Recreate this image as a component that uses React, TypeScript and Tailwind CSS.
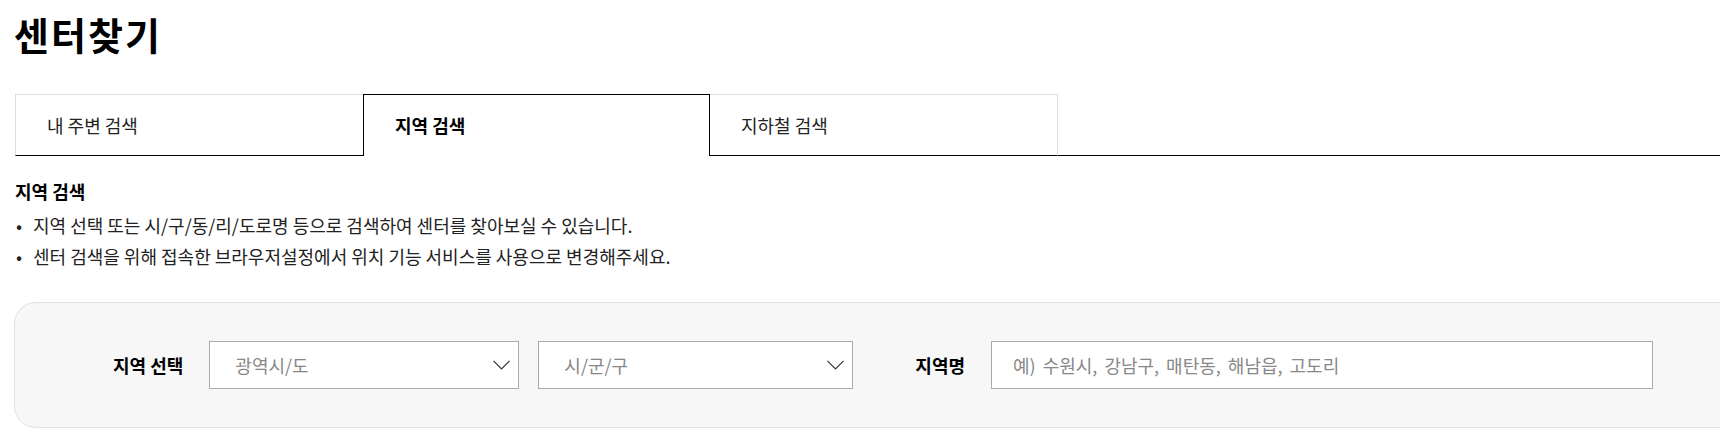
import React from "react";

const Chevron = () => (
  <svg width="17" height="10" viewBox="0 0 17 10" fill="none" className="shrink-0">
    <path d="M0.5 0.8 L8.5 8.8 L16.5 0.8" stroke="#333333" strokeWidth="1.2" />
  </svg>
);

function SelectBox({ placeholder, width }: { placeholder: string; width: string }) {
  return (
    <div
      className={`${width} h-[48px] border border-[#aaaaaa] bg-white flex items-center justify-between pl-[25px] pr-[8px]`}
    >
      <span className="text-[18px] text-[#888888]">{placeholder}</span>
      <Chevron />
    </div>
  );
}

export default function App() {
  return (
    <div
      className="relative w-[1720px] h-[440px] overflow-hidden bg-white text-[#111111]"
      style={{ fontFamily: '"Noto Sans CJK KR", "Noto Sans", sans-serif' }}
    >
      <h1 className="pl-[14px] pt-[14px] leading-[40px] text-[38px] font-bold tracking-[2px] text-black">
        센터찾기
      </h1>

      <div className="mt-[40px] flex h-[62px] pl-[15px]">
        <div className="w-[348px] h-[62px] border-t border-l border-b border-t-[#dddddd] border-l-[#dddddd] border-b-black flex items-center pl-[31px] text-[18px] text-[#222222]">
          내 주변 검색
        </div>
        <div className="w-[347px] h-[62px] border-t border-l border-r border-black flex items-center pl-[31px] text-[18px] font-bold text-black">
          지역 검색
        </div>
        <div className="w-[348px] h-[62px] border-t border-r border-b border-t-[#dddddd] border-r-[#dddddd] border-b-black flex items-center pl-[31px] text-[18px] text-[#222222]">
          지하철 검색
        </div>
        <div className="flex-1 h-[62px] border-b border-black" />
      </div>

      <div className="pl-[15px] mt-[23px]">
        <h2 className="text-[18px] leading-[24px] font-bold text-black">지역 검색</h2>
        <ul className="mt-[7px] text-[18px] leading-[31px] text-[#222222]">
          <li className="flex">
            <span className="w-[18px] pl-[1px]">•</span>
            <span>지역 선택 또는 시/구/동/리/도로명 등으로 검색하여 센터를 찾아보실 수 있습니다.</span>
          </li>
          <li className="flex">
            <span className="w-[18px] pl-[1px]">•</span>
            <span>센터 검색을 위해 접속한 브라우저설정에서 위치 기능 서비스를 사용으로 변경해주세요.</span>
          </li>
        </ul>
      </div>

      <div className="ml-[14px] mt-[30px] w-[1740px] h-[126px] rounded-[22px] border border-[#e2e2e2] bg-[#f7f7f7] flex items-center pl-[98px]">
        <span className="text-[18px] font-bold text-black mr-[26px]">지역 선택</span>
        <SelectBox placeholder="광역시/도" width="w-[310px]" />
        <div className="w-[19px]" />
        <SelectBox placeholder="시/군/구" width="w-[315px]" />
        <span className="text-[18px] font-bold text-black ml-[62px] mr-[26px]">지역명</span>
        <div className="w-[662px] h-[48px] border border-[#aaaaaa] bg-white flex items-center pl-[21px]">
          <span className="text-[18px] text-[#888888] [word-spacing:3px]">예) 수원시, 강남구, 매탄동, 해남읍, 고도리</span>
        </div>
      </div>
    </div>
  );
}
